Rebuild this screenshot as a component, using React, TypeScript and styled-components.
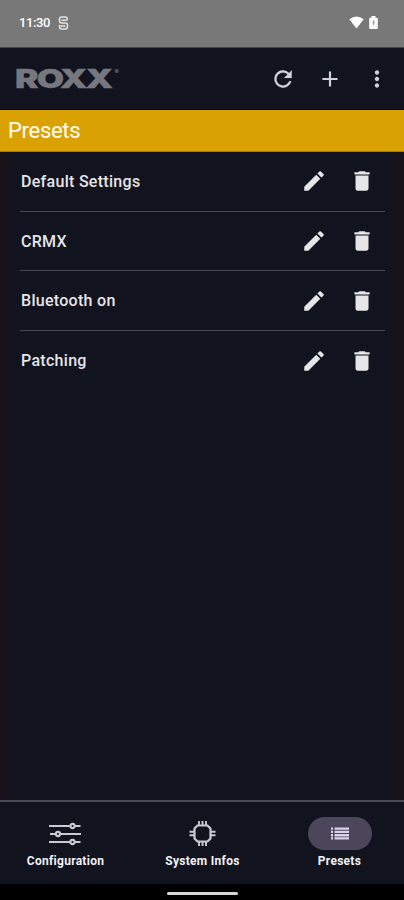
import React from "react";
import styled, { createGlobalStyle } from "styled-components";

const GlobalStyle = createGlobalStyle`
  * { box-sizing: border-box; }
  body { margin: 0; background: #000; }
`;

const Screen = styled.div`
  width: 404px;
  height: 900px;
  display: flex;
  flex-direction: column;
  background: #11131e;
  color: #ececec;
  font-family: Roboto, sans-serif;
  overflow: hidden;
  svg { display: block; flex: none; }
`;

const StatusBar = styled.header`
  height: 48px;
  flex: none;
  display: flex;
  align-items: center;
  padding: 0 26px 2px 19px;
  background: #787878;
  border-bottom: 1px solid #444646;
  color: #fff;
`;

const Clock = styled.span`
  width: 32px;
  font-size: 13px;
  font-weight: 500;
  letter-spacing: -0.4px;
  margin-right: 7px;
  white-space: nowrap;
`;

const StatusIcons = styled.div`
  display: flex;
  align-items: center;
  gap: 5px;
  margin-left: auto;
`;

const AppBar = styled.div`
  height: 62px;
  flex: none;
  display: flex;
  align-items: center;
  padding: 0 14px 0 14px;
  color: #d2d0dc;
  border-bottom: 1px solid #05040f;
`;

const Actions = styled.div<{ $gap: number }>`
  display: flex;
  align-items: center;
  gap: ${(p) => p.$gap}px;
  margin-left: auto;
`;

const IconButton = styled.button`
  display: flex;
  padding: 0;
  border: 0;
  background: none;
  color: inherit;
`;

const Banner = styled.h1`
  height: 42px;
  flex: none;
  margin: 0;
  padding: 0 8px;
  background: #d9a102;
  color: #fff8ea;
  font-size: 22px;
  font-weight: 400;
  line-height: 42px;
  letter-spacing: -0.3px;
  -webkit-text-stroke: 0.15px #fff8ea;
  border-bottom: 1px solid #a77d0b;
`;

const Content = styled.main`
  flex: 1;
  border: solid #17121a;
  border-width: 0 12px;
  padding: 0 7px 0 8px;
`;

const Row = styled.div<{ $last: boolean }>`
  height: 59.7px;
  display: flex;
  align-items: center;
  padding: 0 10px 0 1px;
  font-size: 16px;
  font-weight: 500;
  letter-spacing: 0.29px;
  color: #e6e5e8;
  border-bottom: ${(p) => (p.$last ? "0" : "1px solid #464853")};
`;

const RowLabel = styled.span`
  white-space: nowrap;
`;

const NavBar = styled.nav`
  height: 84px;
  flex: none;
  display: grid;
  grid-template-columns: 130px 144px 130px;
  border-top: 2px solid #4a4857;
`;

const NavItem = styled.div`
  display: flex;
  flex-direction: column;
  align-items: center;
  padding-top: 15px;
  color: #cbc9d2;
`;

const Pill = styled.div<{ $active: boolean }>`
  width: 64px;
  height: 33px;
  border-radius: 17px;
  display: flex;
  align-items: center;
  justify-content: center;
  background: ${(p) => (p.$active ? "#4b4659" : "transparent")};
  margin-left: ${(p) => (p.$active ? 2 : 0)}px;
`;

const NavLabel = styled.span`
  margin-top: 4px;
  padding-left: 1px;
  font-size: 12px;
  line-height: 15px;
  font-weight: 700;
  letter-spacing: 0.28px;
  color: #f2f1f4;
`;

const GestureBar = styled.footer`
  height: 16px;
  flex: none;
  display: flex;
  justify-content: center;
  padding-top: 8px;
  background: #000;
`;

const Handle = styled.div`
  width: 71px;
  height: 3px;
  border-radius: 2px;
  background: #d8d8d8;
`;

const paths = {
  refresh:
    "M17.65 6.35A7.96 7.96 0 0 0 12 4a8 8 0 1 0 7.73 10h-2.08A6 6 0 1 1 12 6c1.66 0 3.14.69 4.22 1.78L13 11h7V4z",
  add: "M19 13h-6v6h-2v-6H5v-2h6V5h2v6h6z",
  more: "M12 8c1.1 0 2-.9 2-2s-.9-2-2-2-2 .9-2 2 .9 2 2 2m0 2c-1.1 0-2 .9-2 2s.9 2 2 2 2-.9 2-2-.9-2-2-2m0 6c-1.1 0-2 .9-2 2s.9 2 2 2 2-.9 2-2-.9-2-2-2",
  edit: "M3 17.25V21h3.75L17.81 9.94l-3.75-3.75zM20.71 7.04a.996.996 0 0 0 0-1.41l-2.34-2.34a.996.996 0 0 0-1.41 0l-1.83 1.83 3.75 3.75z",
  trash: "M6 19c0 1.1.9 2 2 2h8c1.1 0 2-.9 2-2V7H6zM19 4h-3.5l-1-1h-5l-1 1H5v2h14z",
};

const Icon = ({ name }: { name: keyof typeof paths }) => (
  <svg width="26" height="26" viewBox="0 0 24 24" fill="currentColor">
    <path d={paths[name]} stroke="currentColor" strokeWidth={name === "refresh" ? 0.2 : 0} />
  </svg>
);

const Logo = () => (
  <svg width="110" height="40" viewBox="-2 0 110 40" fill="#77777f">
    <text
      transform="translate(-1 29) scale(1.385 1)"
      fontFamily="Inter, sans-serif"
      fontWeight="900"
      fontSize="25.5"
      letterSpacing="-1.4"
      stroke="#77777f"
      strokeWidth="0.3"
    >
      ROXX
    </text>
    <text x="98.5" y="14.5" fontFamily="Inter, sans-serif" fontWeight="700" fontSize="6.5">
      ®
    </text>
  </svg>
);

const AppMark = () => (
  <svg width="11" height="14" viewBox="0 0 11 14" fill="none" stroke="#e4e4e4" strokeWidth="1.5">
    <path d="M9.2 4.5V3.2Q9.2 1 7.3 1H3.7Q1.5 1 1.5 3.2v1.6Q1.5 7 3.7 7h3.6Q9.5 7 9.5 9v1.5Q9.5 13 7.3 13H3.7Q1.5 13 1.5 10.5V9M3.5 4.2h5M2.5 10h5" />
  </svg>
);

const Wifi = () => (
  <svg width="15" height="13" viewBox="0 0 15 13" fill="#fff">
    <path d="M.3 3.2Q7.5-2.2 14.7 3.2L7.5 12.6z" />
  </svg>
);

const Battery = () => (
  <svg width="9" height="13" viewBox="0 0 9 13">
    <path d="M1.2 1.8H2.5V0h4v1.8h1.3q1 0 1 1v9.2q0 1-1 1H1.2q-1 0-1-1V2.8q0-1 1-1" fill="#fff" />
    <path d="M4.8 4 3.6 7h1l-.4 2.6 1.4-3.2H4.6z" fill="#888" stroke="#999" strokeWidth=".5" />
  </svg>
);

const Sliders = () => (
  <svg width="34" height="24" viewBox="0 0 34 24" fill="none" stroke="currentColor" strokeWidth="2.1">
    <path d="M1 4h21.5M27 4h5.5M2 12h5.5M12 12h21M1 20h21.5M27 20h5.5" />
    <circle cx="24.5" cy="4" r="2.1" />
    <circle cx="10" cy="12" r="2.1" />
    <circle cx="24.5" cy="20" r="2.1" />
  </svg>
);

const Chip = () => (
  <svg width="27" height="27" viewBox="0 0 27 27" fill="none" stroke="currentColor">
    <path d="M8.5 5.5h10l3 3v10l-3 3h-10l-3-3v-10z" strokeWidth="2.2" />
    <path
      d="M10 1v4M13.5 1v4M17 1v4M10 22v4M13.5 22v4M17 22v4M.5 11.7H5M.5 15.3H5M22 11.7h4.5M22 15.3h4.5"
      strokeWidth="1.9"
    />
  </svg>
);

const ListIcon = () => (
  <svg width="20" height="13" viewBox="0 0 20 13" fill="#d9d1ea">
    <path d="M1 .5h2v2.3H1zM1 3.8h2v2.3H1zM1 7.1h2v2.3H1zM1 10.3h2v2.3H1zM4.5.5H19v2.3H4.5zM4.5 3.8H19v2.3H4.5zM4.5 7.1H19v2.3H4.5zM4.5 10.3H19v2.3H4.5z" />
  </svg>
);

const presets = ["Default Settings", "CRMX", "Bluetooth on", "Patching"];

const tabs = [
  { label: "Configuration", icon: <Sliders />, active: false },
  { label: "System Infos", icon: <Chip />, active: false },
  { label: "Presets", icon: <ListIcon />, active: true },
];

export default function App() {
  return (
    <Screen>
      <GlobalStyle />
      <StatusBar>
        <Clock>11:30</Clock>
        <AppMark />
        <StatusIcons>
          <Wifi />
          <Battery />
        </StatusIcons>
      </StatusBar>
      <AppBar>
        <Logo />
        <Actions $gap={21}>
          <IconButton aria-label="Refresh"><Icon name="refresh" /></IconButton>
          <IconButton aria-label="Add"><Icon name="add" /></IconButton>
          <IconButton aria-label="More"><Icon name="more" /></IconButton>
        </Actions>
      </AppBar>
      <Banner>Presets</Banner>
      <Content>
        {presets.map((name, i) => (
          <Row key={name} $last={i === presets.length - 1}>
            <RowLabel>{name}</RowLabel>
            <Actions $gap={22}>
              <IconButton aria-label="Edit"><Icon name="edit" /></IconButton>
              <IconButton aria-label="Delete"><Icon name="trash" /></IconButton>
            </Actions>
          </Row>
        ))}
      </Content>
      <NavBar>
        {tabs.map((tab) => (
          <NavItem key={tab.label}>
            <Pill $active={tab.active}>{tab.icon}</Pill>
            <NavLabel>{tab.label}</NavLabel>
          </NavItem>
        ))}
      </NavBar>
      <GestureBar>
        <Handle />
      </GestureBar>
    </Screen>
  );
}
